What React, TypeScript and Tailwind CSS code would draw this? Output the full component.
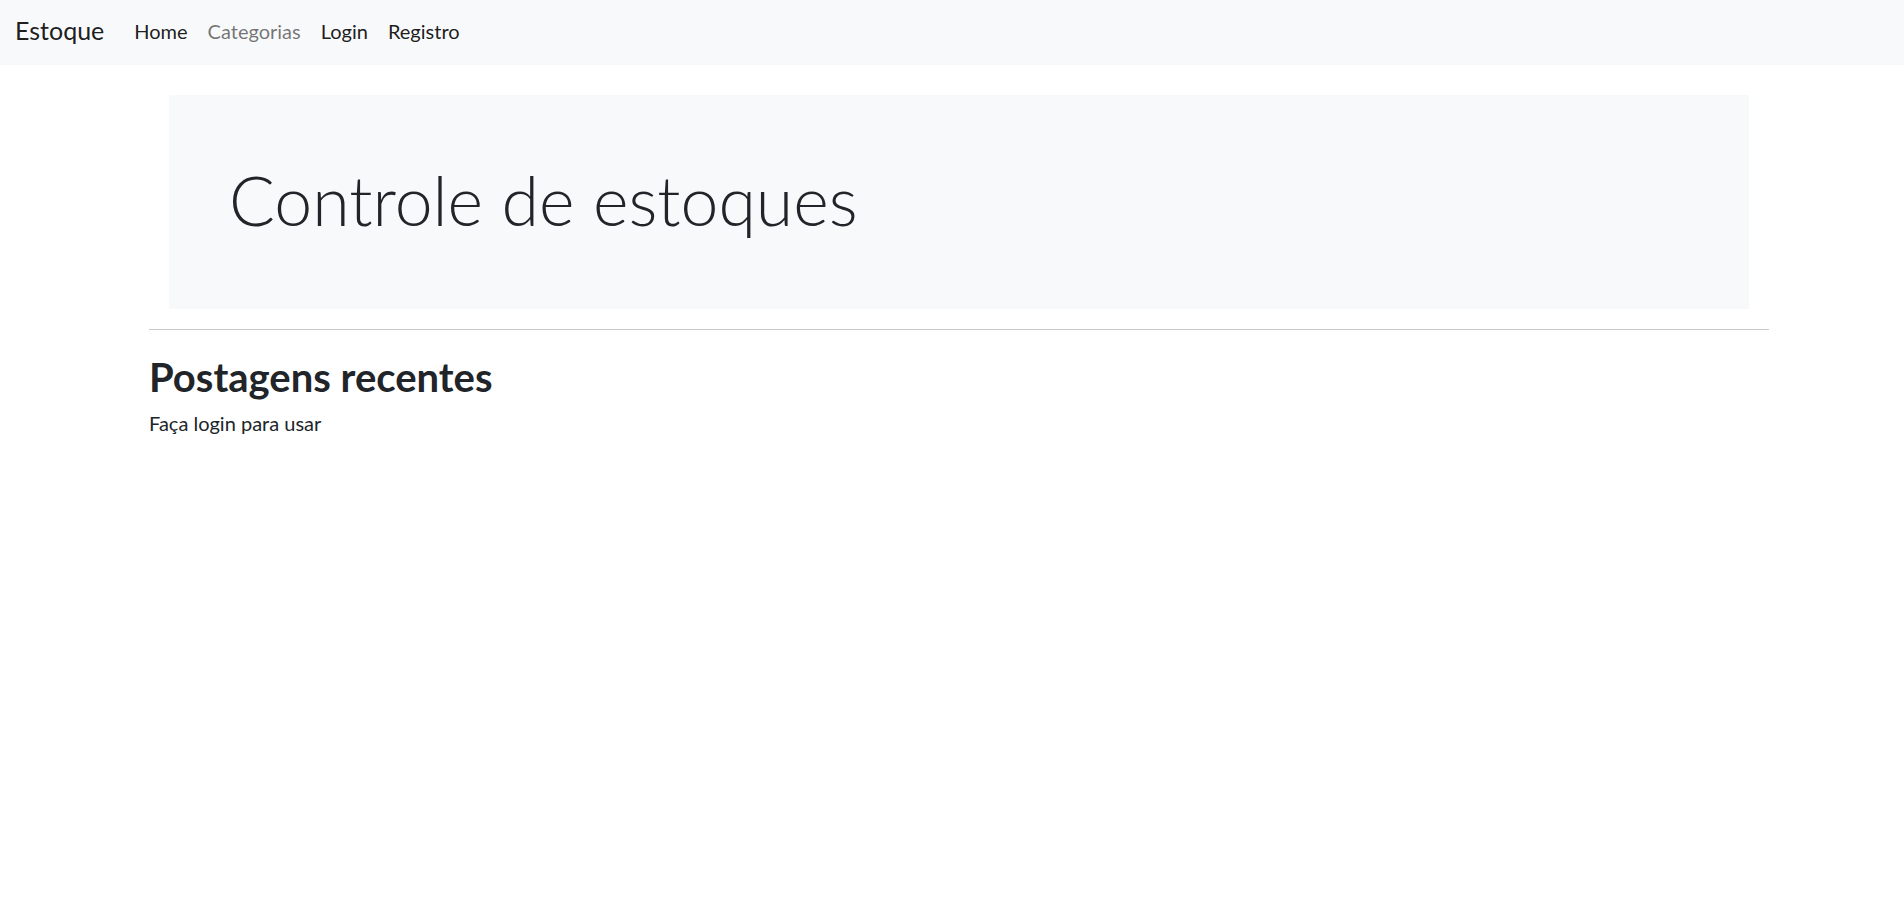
import React from "react";

const links = [
  { label: "Home", muted: false },
  { label: "Categorias", muted: true },
  { label: "Login", muted: false },
  { label: "Registro", muted: false },
];

export default function App() {
  return (
    <div className="min-h-[919px] bg-white font-['Lato','Liberation_Sans',sans-serif] text-[#212529]">
      {/* Navbar */}
      <nav className="flex h-[65px] items-center bg-[#f8f9fa] px-[15px] pb-[4px]">
        <a className="mr-[20px] text-[25px] leading-none text-black/90">Estoque</a>
        <ul className="flex items-center">
          {links.map((l) => (
            <li key={l.label}>
              <a
                className={
                  l.muted
                    ? "block px-[10px] text-[20px] leading-none text-black/55"
                    : "block px-[10px] text-[20px] leading-none text-black/90"
                }
              >
                {l.label}
              </a>
            </li>
          ))}
        </ul>
      </nav>

      <main className="ml-[149px] w-[1620px]">
        {/* Jumbotron */}
        <div className="mx-[20px] mt-[30px] bg-[#f8f9fa] px-[60px] py-[60px]">
          <h1 className="mb-[7px] pt-[3px] text-[68px] font-light leading-[84px]">Controle de estoques</h1>
        </div>

        <hr className="my-[20px] border-t border-[#c8c9ca]" />

        <h2 className="mb-[7px] pt-[3px] text-[40px] font-bold leading-[48px]">Postagens recentes</h2>
        <p className="text-[20px] leading-[30px]">Faça login para usar</p>
      </main>
    </div>
  );
}
